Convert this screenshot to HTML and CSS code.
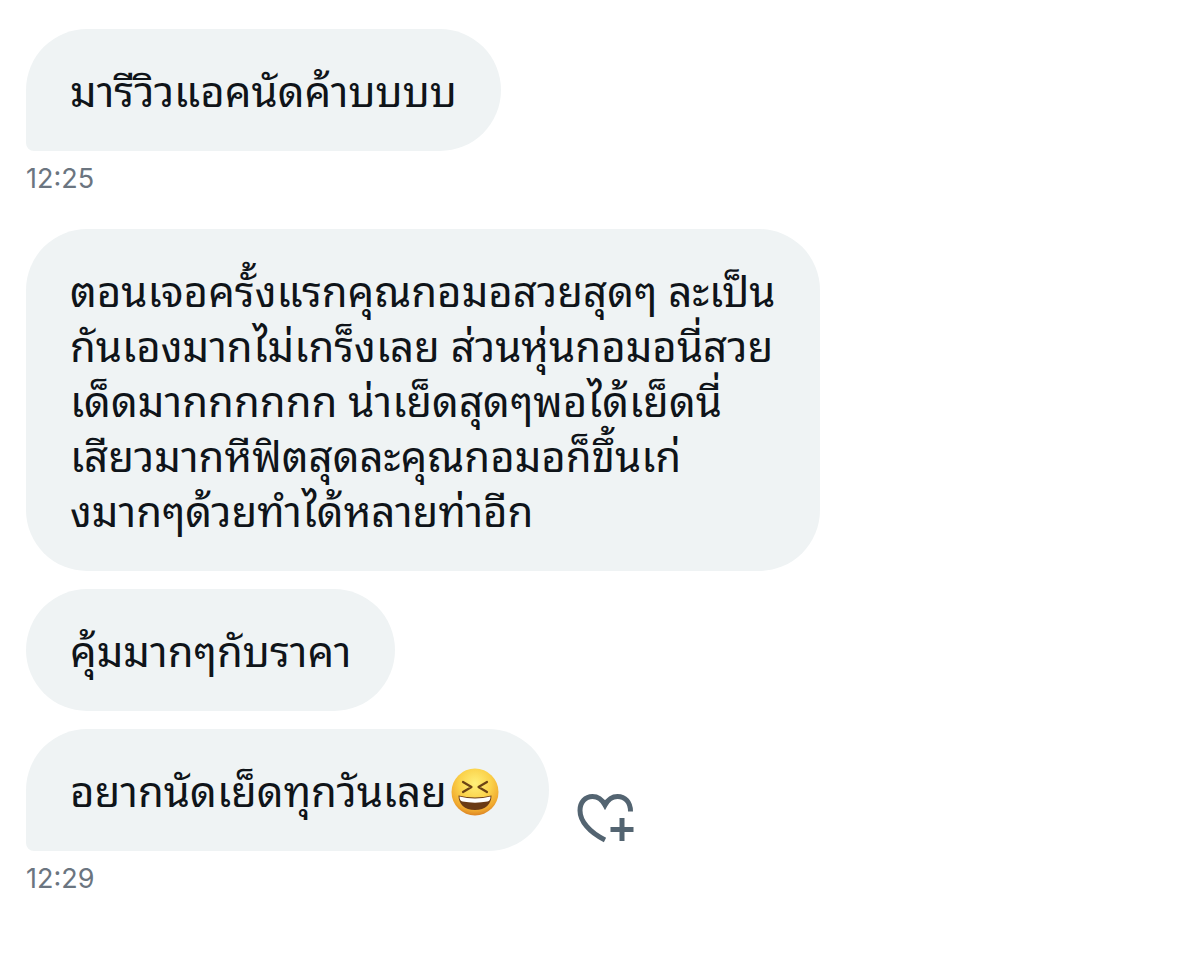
FILE: index.html
```
<!DOCTYPE html>
<html lang="th">
<head>
    <meta charset="UTF-8">
    <meta name="viewport" content="width=device-width, initial-scale=1">
    <title>ข้อความ</title>
    <link rel="stylesheet" href="styles.css">
</head>
<body>
<main class="chat">
    <section class="group">
        <div class="bubble tail">มารีวิวแอคนัดค้าบบบบ</div>
        <time class="time">12:25</time>
    </section>
    <section class="group">
        <div class="bubble">ตอนเจอครั้งแรกคุณกอมอสวยสุดๆ ละเป็น<br>กันเองมากไม่เกร็งเลย ส่วนหุ่นกอมอนี่สวย<br>เด็ดมากกกกกก น่าเย็ดสุดๆพอได้เย็ดนี่<br>เสียวมากหีฟิตสุดละคุณกอมอก็ขึ้นเก่<br>งมากๆด้วยทำได้หลายท่าอีก</div>
        <div class="bubble">คุ้มมากๆกับราคา</div>
        <div class="row">
            <div class="bubble tail">อยากนัดเย็ดทุกวันเลย<svg class="emoji" viewBox="0 0 48 48" role="img" aria-label="หัวเราะ">
                <defs>
                    <radialGradient id="face" cx="50%" cy="32%" r="68%">
                        <stop offset="0" stop-color="#fff07a"/>
                        <stop offset="0.5" stop-color="#fbd24a"/>
                        <stop offset="0.85" stop-color="#f0a92f"/>
                        <stop offset="1" stop-color="#dc8424"/>
                    </radialGradient>
                </defs>
                <circle cx="24" cy="24" r="23.5" fill="url(#face)"/>
                <path d="M12 14l8.500 5-8.500 5M36 14l-8.500 5 8.500 5" fill="none" stroke="#6b4214" stroke-width="2.2" stroke-linecap="round" stroke-linejoin="round"/>
                <path d="M7.500 27.500c10 2.500 23 2.500 33 0 0 8.500-6 14.500-16.500 14.500S7.500 36 7.500 27.500z" fill="#6a3a14"/>
                <path d="M8.500 28.500c10 2.500 21 2.500 31 0 0 3-1 4.500-3 5-8 1.500-17 1.500-25 0-2-.5-3-2-3-5z" fill="#fff"/>
            </svg></div>
            <!--回应按钮-->
            <button class="react" type="button" aria-label="เพิ่มความรู้สึก">
                <svg viewBox="0 0 58 52">
                    <path d="M28 47C12 39 3 28 3 17.500 3 9 8.500 3.500 15.500 3.500c5.500 0 9.500 3 12.500 8.500 3-5.500 7-8.500 12.500-8.500C48 3.500 53.500 9 53.500 18.500" fill="none" stroke="#536471" stroke-width="5"/>
                    <path d="M45 25v23M33.500 36.500h23" fill="none" stroke="#536471" stroke-width="5"/>
                </svg>
            </button>
        </div>
        <time class="time">12:29</time>
    </section>
</main>
</body>
</html>
```
FILE: styles.css
```
* {
    margin: 0;
    padding: 0;
    box-sizing: border-box;
}
body{
    background-color: #fff;
    color: #0f1419;
    font-family: "Noto Sans Thai Looped", "Noto Looped Thai", Loma, Waree, Garuda, "Liberation Sans", sans-serif;
}
.chat{
    display: flex;
    flex-direction: column;
    gap: 32px;
    padding: 29px 26px;
}
.group{
    display: flex;
    flex-direction: column;
    align-items: flex-start;
    gap: 18px;
}
.bubble{
    padding: 32px 44px 35px;
    background-color: #eff3f4;
    border-radius: 61px;
    font-size: 42px;
    line-height: 55px;
}
.tail{
    border-bottom-left-radius: 8px;
}
.row{
    display: flex;
    align-items: flex-end;
    gap: 28px;
}
.emoji{
    width: 48px;
    height: 48px;
    margin: -8px 6px 0 4px;
    vertical-align: -9px;
}
.time{
    margin-top: -8px;
    color: #6b7580;
    font-family: Inter, sans-serif;
    font-size: 27px;
    line-height: 36px;
}
.react{
    margin-bottom: 6px;
    border: none;
    background: none;
    cursor: pointer;
}
.react svg{
    display: block;
    width: 58px;
    height: 52px;
}
```
